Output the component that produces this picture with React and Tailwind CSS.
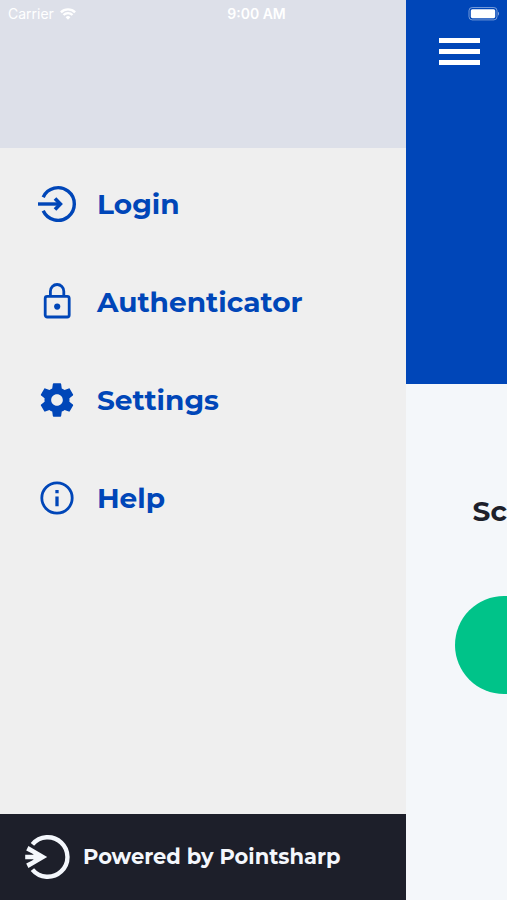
import React from "react";

function LoginIcon() {
  return (
    <svg viewBox="0 0 40 40" className="size-10 shrink-0" fill="none" stroke="currentColor" strokeWidth="3.4" aria-hidden="true">
      <path d="M6.2 13.2A16.3 16.3 0 1 1 6.2 26.8" />
      <path d="M1 20H24" />
      <path d="M18 14.4L23.4 20L18 25.6" strokeWidth="3.6" />
    </svg>
  );
}

function LockIcon() {
  return (
    <svg viewBox="0 0 40 40" className="size-10 shrink-0" fill="none" stroke="currentColor" strokeWidth="2.8" aria-hidden="true">
      <rect x="8.2" y="14.4" width="24" height="20.6" rx="2" />
      <path d="M13.4 14.4V9.2a6.7 6.7 0 0 1 13.4 0V14.4" />
      <circle cx="20.2" cy="24.6" r="3.1" fill="currentColor" stroke="none" />
    </svg>
  );
}

function GearIcon() {
  return (
    <svg viewBox="0 0 24 24" className="size-10 shrink-0" fill="currentColor" aria-hidden="true">
      <path d="M19.43 12.98c.04-.32.07-.64.07-.98s-.03-.66-.07-.98l2.11-1.65c.19-.15.24-.42.12-.64l-2-3.46c-.12-.22-.39-.3-.61-.22l-2.49 1c-.52-.4-1.08-.73-1.69-.98l-.38-2.65A.488.488 0 0 0 14 2h-4c-.25 0-.46.18-.49.42l-.38 2.65c-.61.25-1.17.59-1.69.98l-2.49-1c-.23-.09-.49 0-.61.22l-2 3.46c-.13.22-.07.49.12.64l2.11 1.65c-.04.32-.07.65-.07.98s.03.66.07.98l-2.11 1.65c-.19.15-.24.42-.12.64l2 3.46c.12.22.39.3.61.22l2.49-1c.52.4 1.08.73 1.69.98l.38 2.65c.03.24.24.42.49.42h4c.25 0 .46-.18.49-.42l.38-2.65c.61-.25 1.17-.59 1.69-.98l2.49 1c.23.09.49 0 .61-.22l2-3.46c.12-.22.07-.49-.12-.64l-2.11-1.65zM12 15.5c-1.93 0-3.5-1.57-3.5-3.5s1.57-3.5 3.5-3.5 3.5 1.57 3.5 3.5-1.57 3.5-3.5 3.5z" />
    </svg>
  );
}

function InfoIcon() {
  return (
    <svg viewBox="0 0 40 40" className="size-10 shrink-0" fill="none" stroke="currentColor" strokeWidth="2.8" aria-hidden="true">
      <circle cx="20" cy="20" r="15.2" />
      <path d="M20 18.4V28.2M20 12V15.2" strokeWidth="3.3" />
    </svg>
  );
}

function PointsharpLogo() {
  return (
    <svg viewBox="0 0 46 46" className="size-[46px] shrink-0" fill="none" aria-hidden="true">
      <path d="M8.4 10.4A19.8 19.8 0 1 1 8.4 35.6" stroke="currentColor" strokeWidth="4.4" />
      <path d="M4.4 12L23.2 23L4.4 34L2.2 29.4L8.2 26.4L9.8 25.2H1.2V20.8H9.8L8.2 19.6L2.2 16.6Z" fill="currentColor" />
    </svg>
  );
}

function StatusBar() {
  return (
    <div className="absolute inset-x-0 top-0 grid h-7 grid-cols-3 items-center px-2 font-['Inter',sans-serif] text-[14px] leading-4 text-white">
      <div className="flex items-center gap-1.5">
        <span>Carrier</span>
        <svg viewBox="0 0 16 12" className="h-3 w-4" fill="none" stroke="currentColor" strokeWidth="2.4" aria-hidden="true">
          <path d="M.9 4.3a10 10 0 0 1 14.2 0M3.5 7a6.3 6.3 0 0 1 9 0" />
          <path d="M8 11.8L5.6 9.3a3.4 3.4 0 0 1 4.8 0Z" fill="currentColor" stroke="none" />
        </svg>
      </div>
      <span className="pl-1.5 text-center font-semibold">9:00 AM</span>
      <svg viewBox="0 0 32 14" className="h-3.5 w-8 justify-self-end" aria-hidden="true">
        <rect x="2" y=".5" width="28" height="12.4" rx="3.2" fill="none" stroke="white" strokeOpacity=".45" />
        <rect x="3.8" y="2.2" width="24.4" height="9" rx="1.6" fill="white" />
        <path d="M31 4.7v4a2.4 2.4 0 0 0 0-4Z" fill="white" fillOpacity=".5" />
      </svg>
    </div>
  );
}

const items = [
  { label: "Login", Icon: LoginIcon },
  { label: "Authenticator", Icon: LockIcon },
  { label: "Settings", Icon: GearIcon },
  { label: "Help", Icon: InfoIcon },
];

export default function App() {
  return (
    <div className="relative flex min-h-screen overflow-hidden bg-[#f4f7fa] font-['Montserrat','Inter',sans-serif]">
      <aside className="flex w-4/5 shrink-0 flex-col bg-[#efefef]">
        <div className="h-37 bg-[#dde0e9]" />
        <nav className="flex flex-1 flex-col pt-[7px]">
          {items.map(({ label, Icon }) => (
            <a
              key={label}
              href={`#${label.toLowerCase()}`}
              className="flex h-[98px] items-center gap-5 px-[37px] text-[28px] leading-9 font-bold text-[#0046b8]"
            >
              <Icon />
              {label}
            </a>
          ))}
        </nav>
        <footer className="flex h-[86px] items-center gap-[13px] bg-[#1d1f2a] px-6 text-[21px] leading-7 font-bold text-[#f4f7fc]">
          <PointsharpLogo />
          <span className="whitespace-nowrap">Powered by Pointsharp</span>
        </footer>
      </aside>

      <main className="min-w-0 flex-1 overflow-hidden">
        <header className="h-96 bg-[#0046b8] px-[33px] pt-[38px]">
          <button type="button" aria-label="Menu" className="flex w-[41px] flex-col gap-1.5">
            <span className="h-[5px] w-full bg-white" />
            <span className="h-[5px] w-full bg-white" />
            <span className="h-[5px] w-full bg-white" />
          </button>
        </header>
        <h1 className="pt-[109px] pl-[67px] text-[28px] leading-9 font-bold text-[#1d1f2a]">Sc</h1>
        <button type="button" aria-label="Scan" className="mt-[67px] ml-[49px] block size-[98px] rounded-full bg-[#00c389]" />
      </main>

      <StatusBar />
    </div>
  );
}
